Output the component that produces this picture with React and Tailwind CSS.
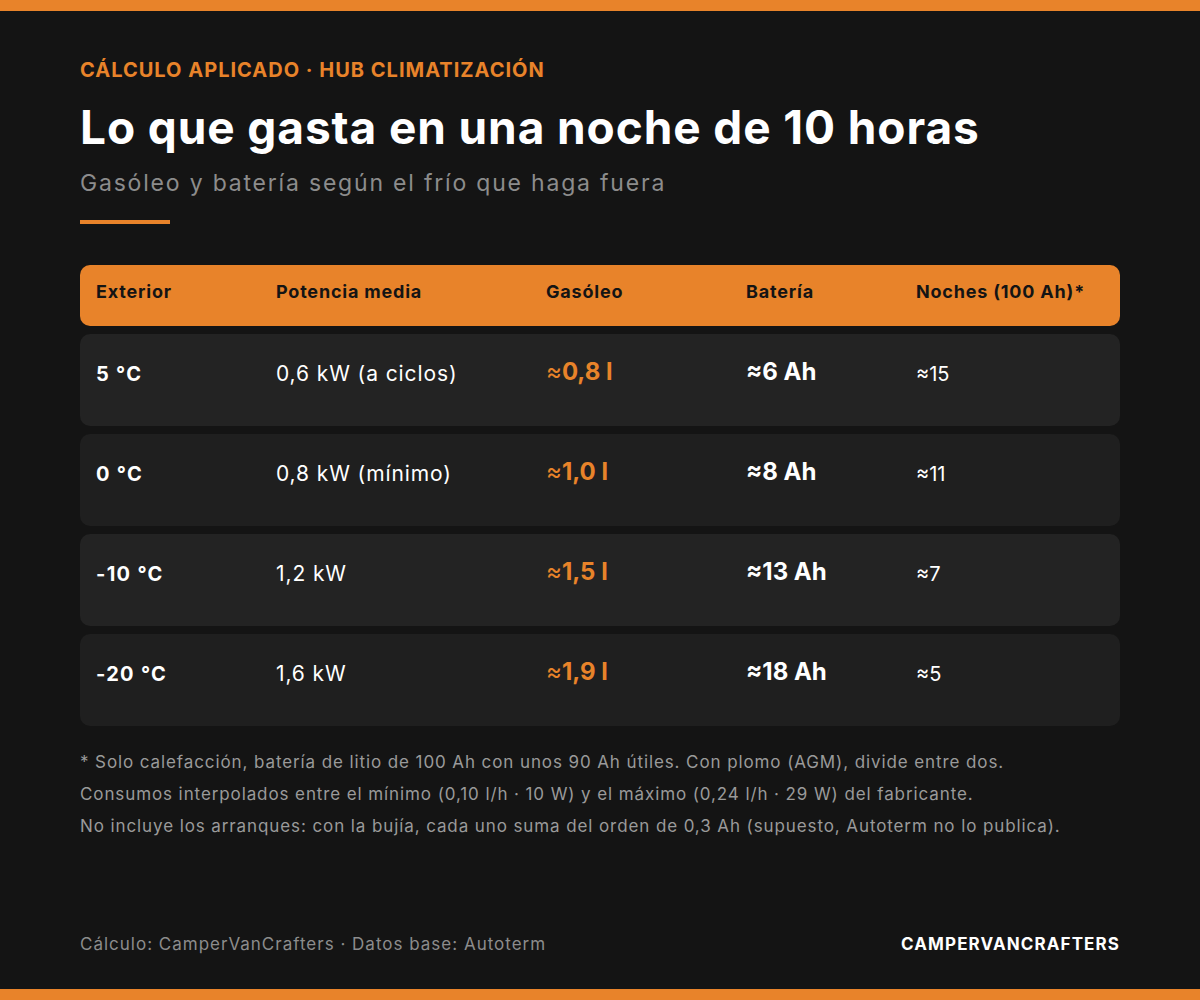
const rows = [
  { t: "5 °C", p: "0,6 kW (a ciclos)", g: "0,8 l", b: "6 Ah", n: "15", bg: "bg-[#232323]" },
  { t: "0 °C", p: "0,8 kW (mínimo)", g: "1,0 l", b: "8 Ah", n: "11", bg: "bg-[#1f1f1f]" },
  { t: "-10 °C", p: "1,2 kW", g: "1,5 l", b: "13 Ah", n: "7", bg: "bg-[#232323]" },
  { t: "-20 °C", p: "1,6 kW", g: "1,9 l", b: "18 Ah", n: "5", bg: "bg-[#1f1f1f]" },
];

const App = () => {
  return (
    <div className="w-[1200px] h-[1000px] bg-[#141414] flex flex-col font-['Inter',sans-serif]">
      <div className="h-[11px] bg-[#e8832a]" />
      <div className="flex-1 flex flex-col px-[80px] pt-[45px]">
        <div className="text-[20px] leading-[28px] font-bold text-[#e8832a] tracking-[1px]">
          CÁLCULO APLICADO · HUB CLIMATIZACIÓN
        </div>
        <h1 className="mt-[15px] text-[46px] leading-[56px] font-bold text-white tracking-[0.9px]">
          Lo que gasta en una noche de 10 horas
        </h1>
        <div className="mt-[13px] text-[23px] leading-[30px] text-[#8c8c8c] tracking-[1.8px]">
          Gasóleo y batería según el frío que haga fuera
        </div>
        <div className="mt-[22px] w-[90px] h-[4px] bg-[#e8832a]" />

        <div className="mt-[41px] flex flex-col gap-[8px]">
          <div className="h-[61px] rounded-[10px] bg-[#e8832a] flex pl-[16px] pt-[15px] text-[18px] leading-[24px] font-bold text-[#141414] tracking-[0.8px]">
            <div className="w-[180px]">Exterior</div>
            <div className="w-[270px]">Potencia media</div>
            <div className="w-[200px]">Gasóleo</div>
            <div className="w-[170px]">Batería</div>
            <div>Noches (100 Ah)*</div>
          </div>
          {rows.map((r) => (
            <div key={r.t} className={`h-[92px] rounded-[10px] ${r.bg} flex items-start pl-[16px] pt-[24px] text-white`}>
              <div className="w-[180px] pt-[2px] text-[20px] leading-[28px] font-bold tracking-[1.3px]">{r.t}</div>
              <div className="w-[270px] pt-[2px] text-[21px] leading-[28px] tracking-[0.9px]">{r.p}</div>
              <div className="w-[200px] text-[24px] leading-[28px] font-bold text-[#e8832a]">
                <span className="font-normal">≈</span>{r.g}
              </div>
              <div className="w-[170px] text-[24px] leading-[28px] font-bold">≈{r.b}</div>
              <div className="pt-[2px] text-[20px] leading-[28px]">≈{r.n}</div>
            </div>
          ))}
        </div>

        <div className="mt-[20px] text-[17px] leading-[32px] text-[#9a9a9a] tracking-[0.9px]">
          <div>* Solo calefacción, batería de litio de 100 Ah con unos 90 Ah útiles. Con plomo (AGM), divide entre dos.</div>
          <div>Consumos interpolados entre el mínimo (0,10 l/h · 10 W) y el máximo (0,24 l/h · 29 W) del fabricante.</div>
          <div>No incluye los arranques: con la bujía, cada uno suma del orden de 0,3 Ah (supuesto, Autoterm no lo publica).</div>
        </div>

        <div className="mt-auto mb-[33px] flex justify-between items-center text-[17px] leading-[24px] tracking-[1px]">
          <div className="text-[#8c8c8c]">Cálculo: CamperVanCrafters · Datos base: Autoterm</div>
          <div className="font-bold text-white tracking-[1.1px]">CAMPERVANCRAFTERS</div>
        </div>
      </div>
      <div className="h-[11px] bg-[#e8832a]" />
    </div>
  );
};

export default App;
